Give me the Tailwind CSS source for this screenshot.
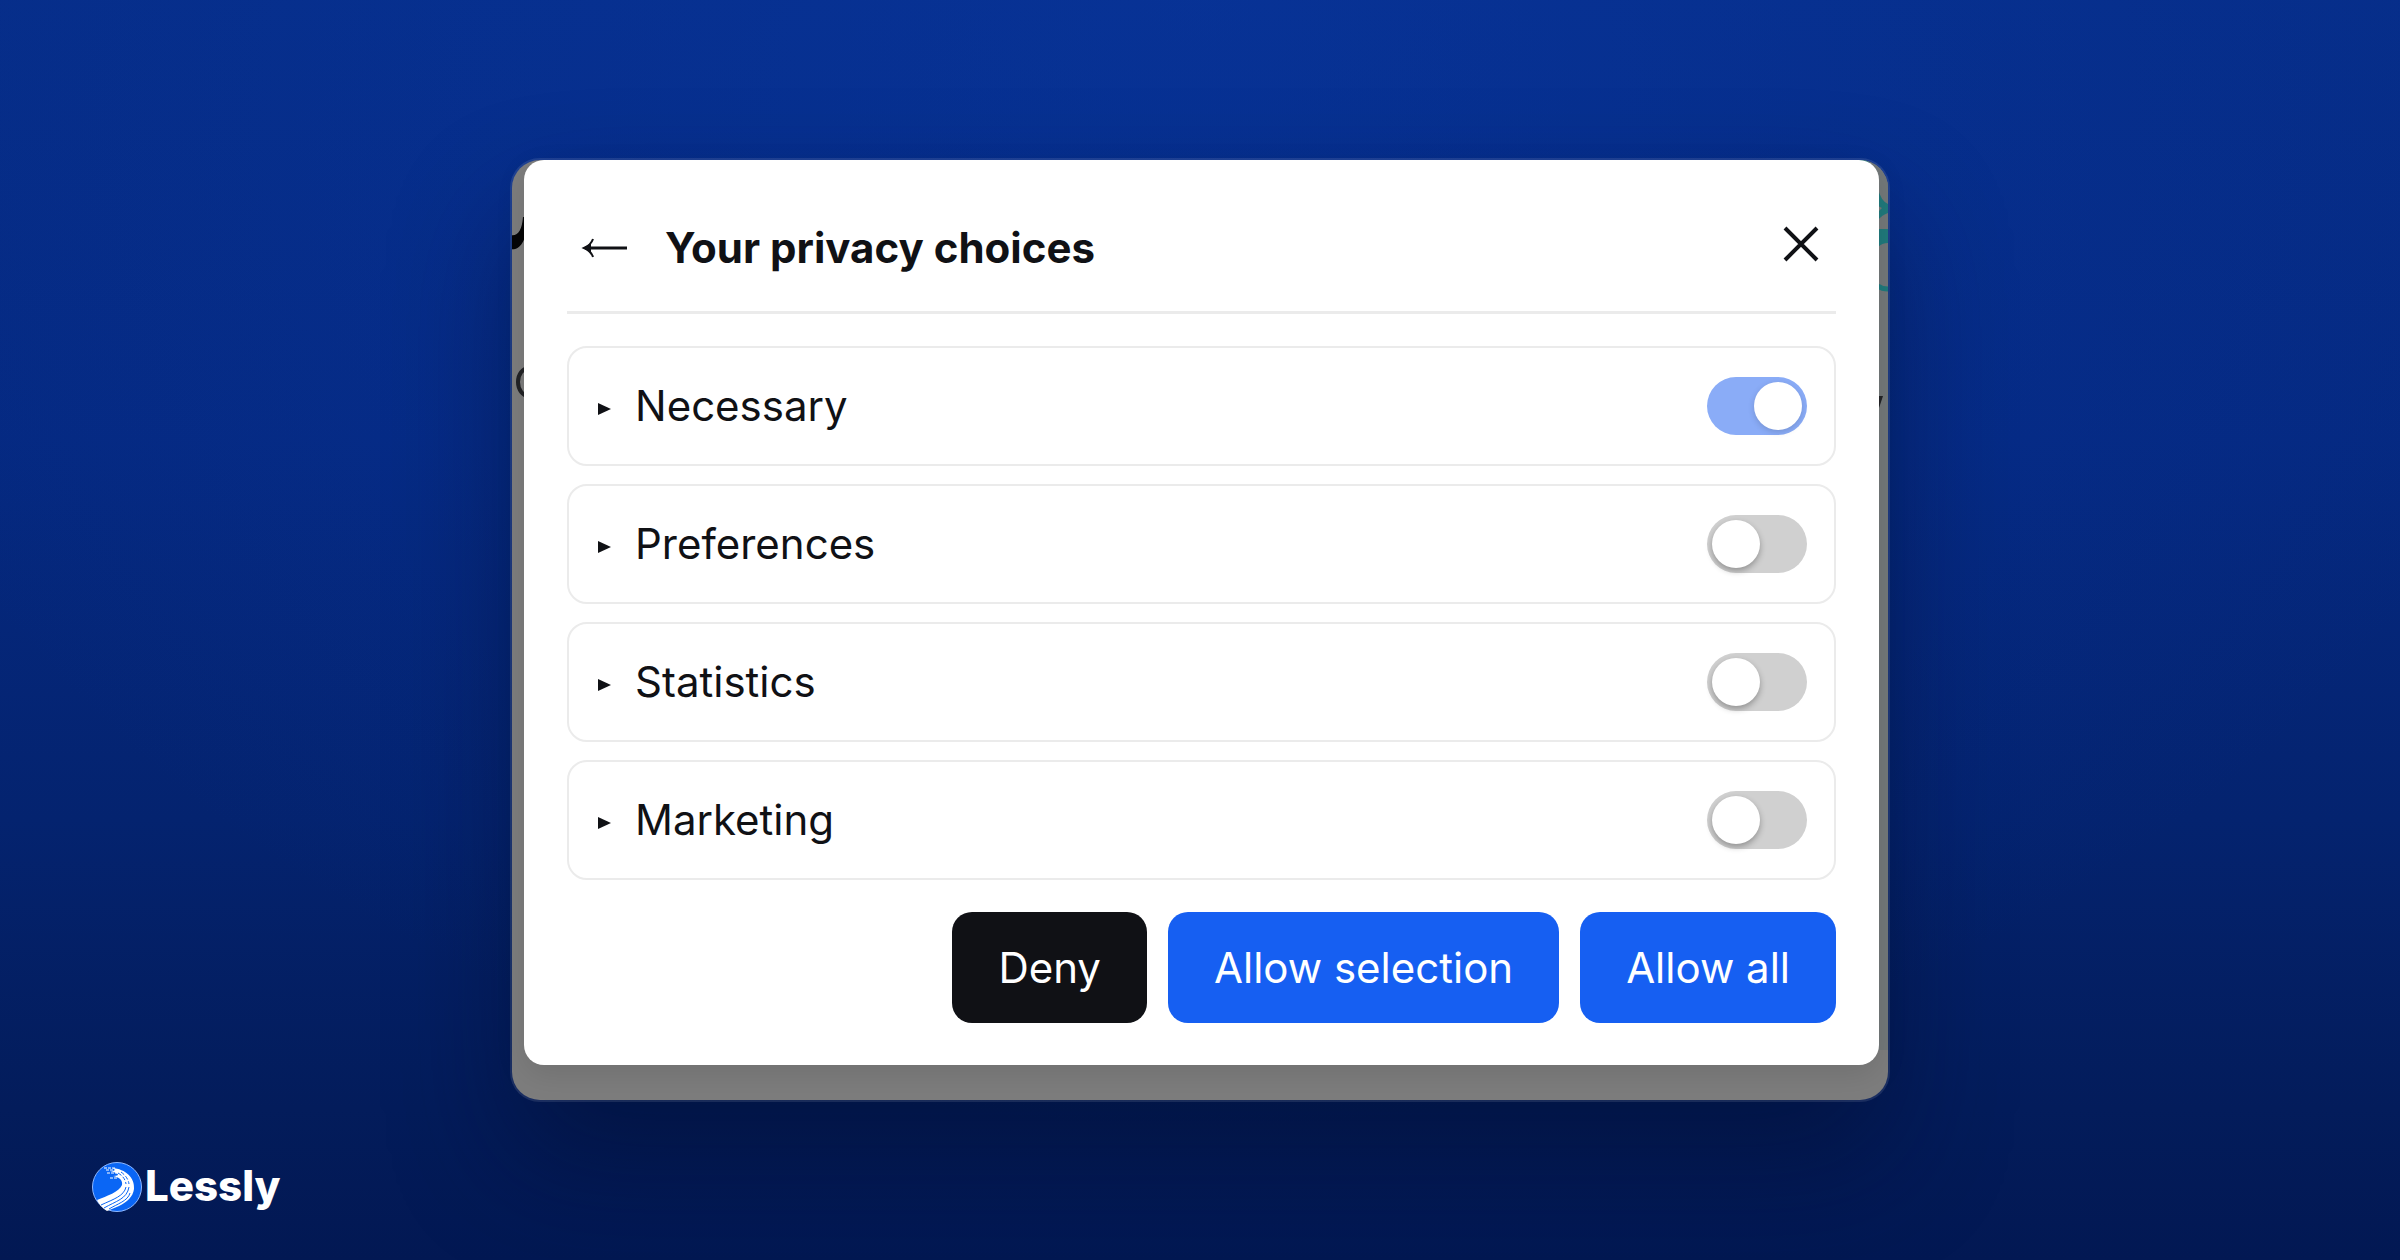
<!DOCTYPE html>
<html lang="en">
<head>
<meta charset="utf-8">
<meta name="viewport" content="width=device-width, initial-scale=1">
<title>Your privacy choices</title>
<script src="https://cdn.jsdelivr.net/npm/@tailwindcss/browser@4"></script>
</head>
<body class="grid min-h-screen grid-rows-[1fr_auto_1fr] bg-[radial-gradient(ellipse_60%_90%_at_50%_0%,rgb(10_60_175/0.35),transparent),linear-gradient(to_bottom,#062d88,#052981_35%,#04236f_65%,#031c5b_88%,#021853)] font-[Inter,sans-serif] text-[#101115]">

<main class="row-start-2 flex justify-center px-4">
  <div class="relative w-full max-w-[1376px] rounded-[28px] bg-[#7d7d7d] pr-[9px] pb-[35px] pl-3 shadow-[0_60px_120px_rgb(0_10_40/0.45)] ring-2 ring-white/10">

    <!-- Page content showing behind the dialog -->
    <div class="absolute inset-0 overflow-hidden rounded-[28px]" aria-hidden="true">
      <div class="absolute top-0 right-0 h-[890px] w-6 bg-[#737879]"></div>
      <svg class="absolute top-0 left-0" width="28" height="300" viewBox="0 0 28 300">
        <path d="M-2 75V89C7 91 16 82 15 57H11C10 70 6 77 -2 75Z" fill="#050506"/>
        <ellipse cx="17" cy="222" rx="11" ry="14" fill="none" stroke="#222326" stroke-width="4"/>
      </svg>
      <svg class="absolute top-0 right-0" width="40" height="300" viewBox="0 0 40 300">
        <path d="M0 0H18Q25 5 28 12H20Z" fill="#20797b"/>
        <path d="M30 29Q33 41 40 44V53Q34 55 30 60V52L34 48L30 46ZM30 69H40V83Q34 83 30 87Z" fill="#20797b"/>
        <path d="M30 126Q34 129 40 129" fill="none" stroke="#20797b" stroke-width="5"/>
        <path d="M28 236H35L31 248Z" fill="#222326"/>
      </svg>
    </div>

    <section role="dialog" aria-labelledby="dialog-title" class="relative rounded-[20px] bg-white px-[43px] pb-[42px] shadow-[0_10px_30px_rgb(0_0_0/0.1)]">
      <header class="flex h-[154px] items-center border-b-3 border-[#ebebeb] pt-6 pr-4 pl-[14px]">
        <button type="button" aria-label="Back" class="mr-[38px] shrink-0">
          <svg width="46" height="20" viewBox="0 0 46 20" fill="none" stroke="#101115" stroke-width="3"><path d="M4 10H46"/><path stroke-width="2" d="M12 1Q10 7 3 10Q10 13 12 19"/><path d="M2 10L10 5V15Z" fill="#101115" stroke="none"/></svg>
        </button>
        <h1 id="dialog-title" class="flex-1 text-[42px] leading-[52px] font-bold">Your privacy choices</h1>
        <button type="button" aria-label="Close" class="mb-2 shrink-0">
          <svg width="38" height="38" viewBox="0 0 38 38" fill="none" stroke="#101115" stroke-width="4"><path d="M3 3L35 35M35 3L3 35"/></svg>
        </button>
      </header>

      <div class="mt-8 flex flex-col gap-[18px]">
        <div class="flex h-[120px] items-center rounded-[20px] border-2 border-[#ebebeb] pr-[27px] pl-[29px]">
          <svg class="mt-[6px] mr-6 shrink-0" width="13" height="14" viewBox="0 0 13 14" fill="#101115" aria-hidden="true"><path d="M0 1L13 7L0 13Z"/></svg>
          <label for="necessary" class="flex-1 text-[42px] leading-[52px]">Necessary</label>
          <input id="necessary" type="checkbox" role="switch" checked disabled class="flex h-[58px] w-[100px] shrink-0 appearance-none items-center rounded-full bg-[#d0d0d0] px-[5px] before:size-12 before:rounded-full before:bg-white before:shadow-[0_2px_6px_rgb(0_0_0/0.15)] checked:justify-end checked:bg-[#8aacf7]">
        </div>
        <div class="flex h-[120px] items-center rounded-[20px] border-2 border-[#ebebeb] pr-[27px] pl-[29px]">
          <svg class="mt-[6px] mr-6 shrink-0" width="13" height="14" viewBox="0 0 13 14" fill="#101115" aria-hidden="true"><path d="M0 1L13 7L0 13Z"/></svg>
          <label for="preferences" class="flex-1 text-[42px] leading-[52px]">Preferences</label>
          <input id="preferences" type="checkbox" role="switch" class="flex h-[58px] w-[100px] shrink-0 appearance-none items-center rounded-full bg-[#d0d0d0] px-[5px] before:size-12 before:rounded-full before:bg-white before:shadow-[0_3px_6px_rgb(0_0_0/0.3)] checked:justify-end checked:bg-[#165ff2]">
        </div>
        <div class="flex h-[120px] items-center rounded-[20px] border-2 border-[#ebebeb] pr-[27px] pl-[29px]">
          <svg class="mt-[6px] mr-6 shrink-0" width="13" height="14" viewBox="0 0 13 14" fill="#101115" aria-hidden="true"><path d="M0 1L13 7L0 13Z"/></svg>
          <label for="statistics" class="flex-1 text-[42px] leading-[52px]">Statistics</label>
          <input id="statistics" type="checkbox" role="switch" class="flex h-[58px] w-[100px] shrink-0 appearance-none items-center rounded-full bg-[#d0d0d0] px-[5px] before:size-12 before:rounded-full before:bg-white before:shadow-[0_3px_6px_rgb(0_0_0/0.3)] checked:justify-end checked:bg-[#165ff2]">
        </div>
        <div class="flex h-[120px] items-center rounded-[20px] border-2 border-[#ebebeb] pr-[27px] pl-[29px]">
          <svg class="mt-[6px] mr-6 shrink-0" width="13" height="14" viewBox="0 0 13 14" fill="#101115" aria-hidden="true"><path d="M0 1L13 7L0 13Z"/></svg>
          <label for="marketing" class="flex-1 text-[42px] leading-[52px]">Marketing</label>
          <input id="marketing" type="checkbox" role="switch" class="flex h-[58px] w-[100px] shrink-0 appearance-none items-center rounded-full bg-[#d0d0d0] px-[5px] before:size-12 before:rounded-full before:bg-white before:shadow-[0_3px_6px_rgb(0_0_0/0.3)] checked:justify-end checked:bg-[#165ff2]">
        </div>
      </div>

      <div class="mt-8 flex flex-wrap justify-end gap-[21px] text-[42px] leading-[52px] text-white">
        <button type="button" class="h-[111px] rounded-[20px] bg-[#101115] px-[46px]">Deny</button>
        <button type="button" class="h-[111px] rounded-[20px] bg-[#165ff2] px-[46px]">Allow selection</button>
        <button type="button" class="h-[111px] rounded-[20px] bg-[#165ff2] px-[46px]">Allow all</button>
      </div>
    </section>
  </div>
</main>

<footer class="row-start-3 flex items-end px-[92px] pb-12">
  <a href="#" class="flex items-center gap-[3px] text-[42px] leading-[46px] font-extrabold text-white">
    <svg width="50" height="50" viewBox="0 0 50 50" aria-hidden="true">
      <circle cx="25" cy="25" r="24.5" fill="#0a66f5" stroke="#8fb8ff"/>
      <path d="M20 6C34 7 43 16 42 27C41 35 35 40 27 44L15 49Q8 45 5 38C15 34 27 30 30 23C31 18 27 15 21 14C29 14 27 11 18 9C24 9 25 8 20 6Z" fill="#fff"/>
      <g fill="none" stroke="#fff" stroke-dasharray="3 1"><path d="M12 6H24M14 8H26M15 11H25M18 16H26"/></g>
      <g fill="none" stroke="#0a66f5"><path d="M9 43C22 37 32 34 34 25M12 46C24 39 35 37 37 25M17 47C25 42 36 39 38 31"/><path d="M26 11Q33 15 34 22M29 10Q36 15 37 22" stroke-dasharray="4 2"/></g>
    </svg>
    <span class="pb-[2px]">Lessly</span>
  </a>
</footer>
</body>
</html>
